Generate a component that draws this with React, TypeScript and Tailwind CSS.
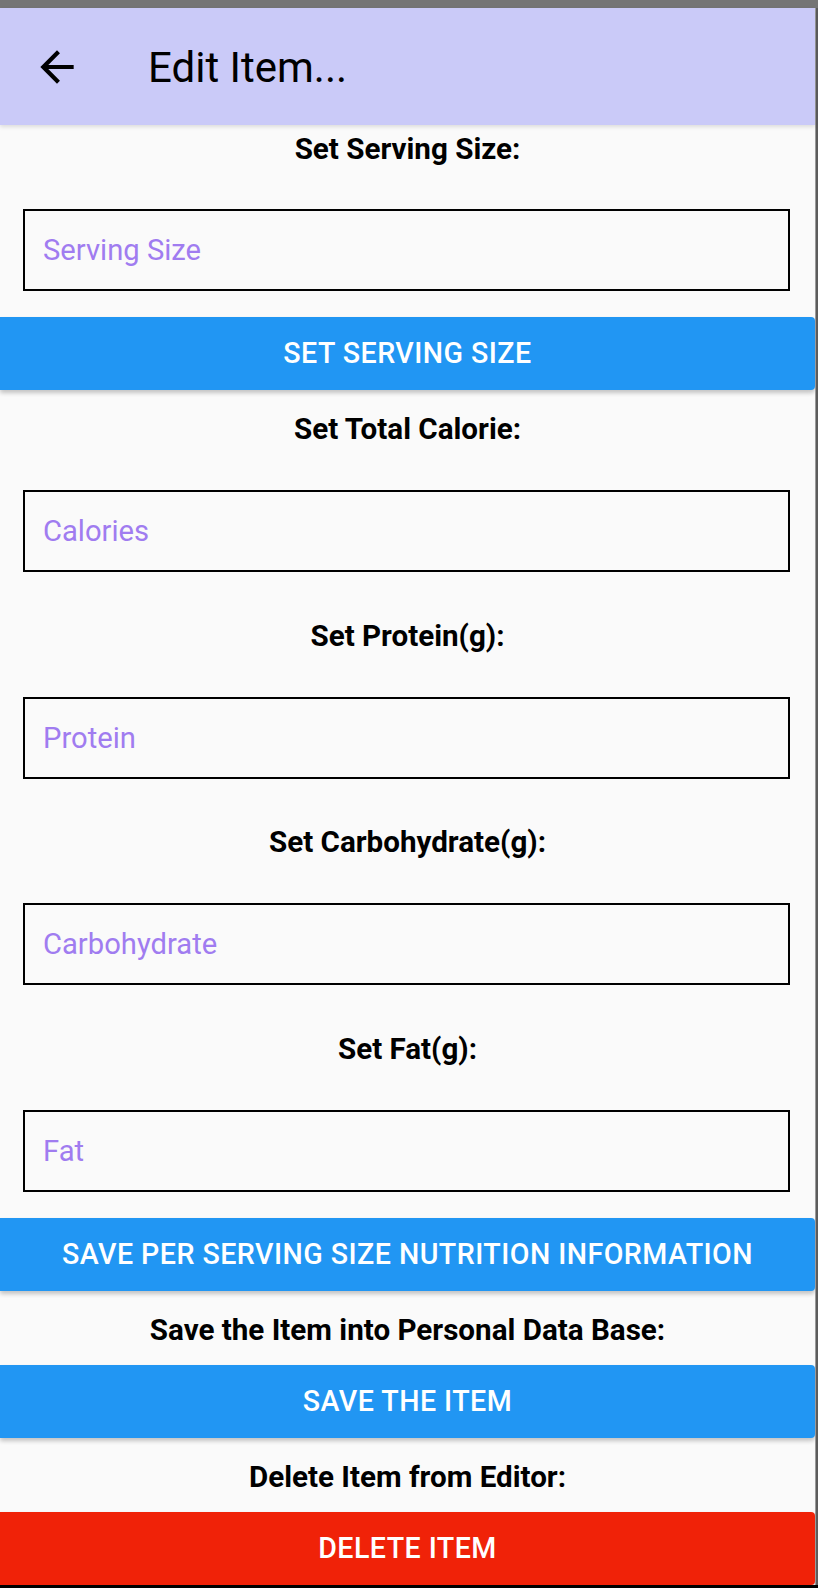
import React from "react";

const fields = [
  { label: "Set Serving Size:", placeholder: "Serving Size" },
  { label: "Set Total Calorie:", placeholder: "Calories" },
  { label: "Set Protein(g):", placeholder: "Protein" },
  { label: "Set Carbohydrate(g):", placeholder: "Carbohydrate" },
  { label: "Set Fat(g):", placeholder: "Fat" },
];

function Label({ text, className = "" }: { text: string; className?: string }) {
  return (
    <div className={`h-[34px] leading-[34px] text-center text-[29.6px] font-bold text-black ${className}`}>
      {text}
    </div>
  );
}

function Field({ placeholder, className = "" }: { placeholder: string; className?: string }) {
  return (
    <input
      type="text"
      placeholder={placeholder}
      className={`ml-[23px] w-[767px] h-[82px] border-2 border-black bg-transparent px-[18px] text-[29.2px] text-black outline-none placeholder:text-[#a07cf0] ${className}`}
    />
  );
}

function ActionButton({
  text,
  color,
  className = "",
}: {
  text: string;
  color: "blue" | "red";
  className?: string;
}) {
  return (
    <button
      className={`w-full h-[73px] rounded-r-[4px] text-white text-[28.6px] font-medium tracking-[0.016em] uppercase shadow-[0_3px_4px_rgba(0,0,0,0.22)] ${
        color === "blue" ? "bg-[#2196f3]" : "bg-[#f02208]"
      } ${className}`}
    >
      {text}
    </button>
  );
}

export default function App() {
  return (
    <div className="w-[818px] h-[1588px] flex flex-col overflow-hidden bg-[#fafafa] font-['Roboto',sans-serif]">
      <div className="h-[8px] bg-[#757575] shrink-0" />
      <div className="flex flex-1">
        <main className="w-[815px] flex flex-col">
          {/* toolbar */}
          <header className="relative z-10 h-[117px] shrink-0 bg-[#cacaf8] flex items-center shadow-[0_2px_4px_rgba(0,0,0,0.12)]">
            <svg viewBox="0 0 24 24" className="ml-[32px] w-[50px] h-[50px]" fill="currentColor">
              <path d="M20 11H7.83l5.59-5.59L12 4l-8 8 8 8 1.41-1.41L7.83 13H20v-2z" />
            </svg>
            <h1 className="ml-[66px] mt-[2px] text-[42px] font-normal text-black leading-none">Edit Item...</h1>
          </header>

          <Label text={fields[0].label} className="mt-[7px]" />
          <Field placeholder={fields[0].placeholder} className="mt-[43px]" />
          <ActionButton text="Set Serving Size" color="blue" className="mt-[26px]" />

          <Label text={fields[1].label} className="mt-[22px]" />
          <Field placeholder={fields[1].placeholder} className="mt-[44px]" />

          <Label text={fields[2].label} className="mt-[47px]" />
          <Field placeholder={fields[2].placeholder} className="mt-[44px]" />

          <Label text={fields[3].label} className="mt-[46px]" />
          <Field placeholder={fields[3].placeholder} className="mt-[44px]" />

          <Label text={fields[4].label} className="mt-[47px]" />
          <Field placeholder={fields[4].placeholder} className="mt-[44px]" />

          <ActionButton text="Save per serving size nutrition information" color="blue" className="mt-[26px]" />

          <Label text="Save the Item into Personal Data Base:" className="mt-[22px]" />
          <ActionButton text="Save the Item" color="blue" className="mt-[18px]" />

          <Label text="Delete Item from Editor:" className="mt-[22px]" />
          <ActionButton text="Delete Item" color="red" className="mt-[18px]" />
        </main>
        <div className="w-[3px] bg-[#5c5c5c] border-l border-[#9a9a9a]" />
      </div>
      <div className="h-[3px] bg-black shrink-0" />
    </div>
  );
}
